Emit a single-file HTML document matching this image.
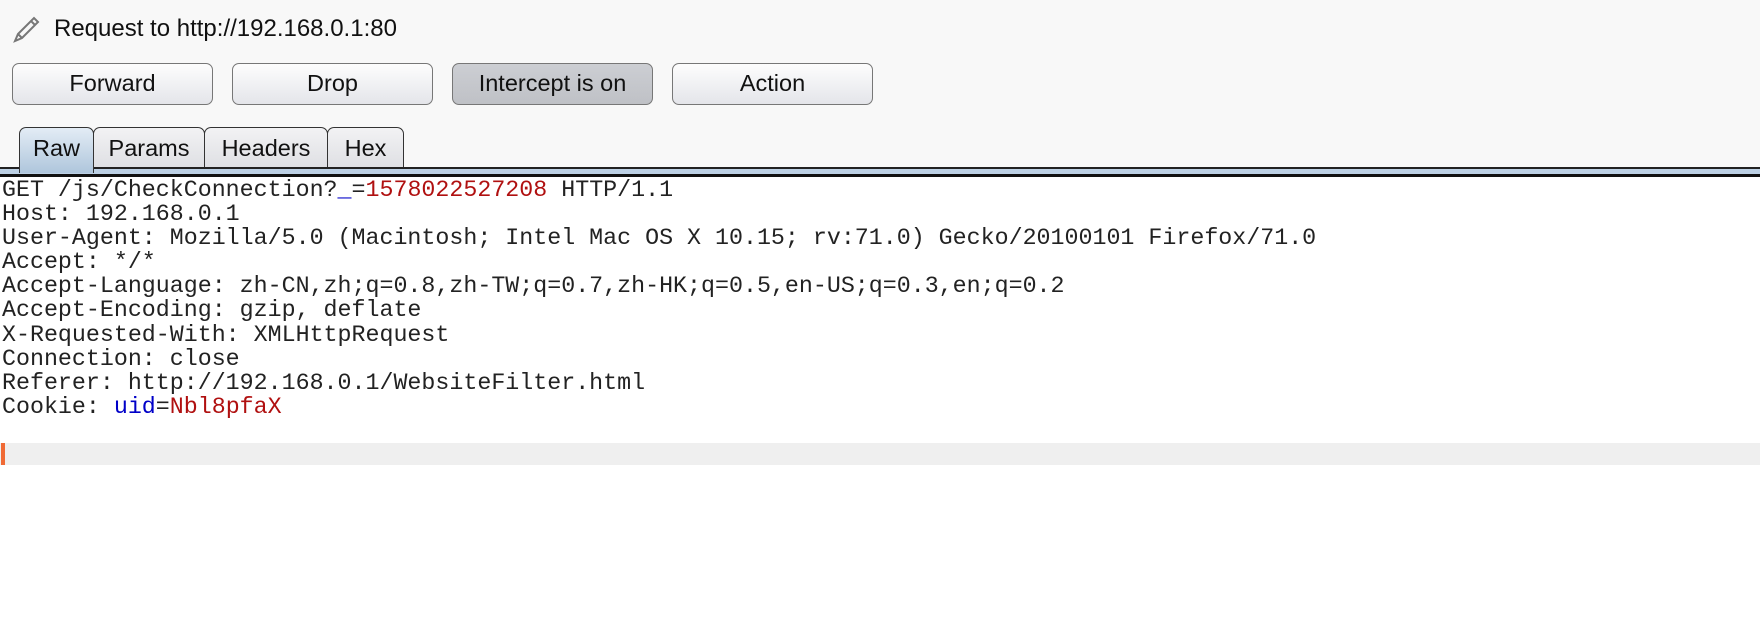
<!DOCTYPE html>
<html><head><meta charset="utf-8"><style>
*{margin:0;padding:0;box-sizing:border-box}
body{width:1760px;height:644px;background:#fff;position:relative;overflow:hidden;font-family:"Liberation Sans",sans-serif}
.top{position:absolute;left:0;top:0;width:1760px;height:168px;background:#f8f8f8}
.title{position:absolute;left:54px;top:15px;font-size:24px;color:#111}
.btn{position:absolute;top:63px;width:201px;height:42px;border:1.5px solid #777;border-radius:7px;background:linear-gradient(#fdfdfd,#e4e5ea);font-size:23.5px;text-align:center;line-height:39px;color:#111}
.btn.on{background:linear-gradient(#ccced3,#bfc1c6)}
.tab{position:absolute;top:127px;height:42px;border:1.5px solid #333;border-bottom:none;border-radius:7px 7px 0 0;background:linear-gradient(#f2f2f4,#dedfe3);font-size:23.5px;text-align:center;line-height:40px;color:#111}
.tab.sel{background:linear-gradient(#e3ecf5,#afc6dc);z-index:2;height:46px}
.band{position:absolute;left:0;top:167px;width:1760px;height:10px;background:#bcd0e4;border-top:2px solid #222;border-bottom:3px solid #111}
pre{position:absolute;left:2px;top:178px;font-family:"Liberation Mono",monospace;font-size:23.3px;line-height:24.1px;color:#222}
.r{color:#b01010}.b{color:#0000c8}
.gray{position:absolute;left:0;top:443px;width:1760px;height:22px;background:#efefef}
.caret{position:absolute;left:1px;top:443px;width:4px;height:22px;background:#f06a35}
</style></head><body>
<div class="top"></div>
<svg style="position:absolute;left:10px;top:14px" width="32" height="32" viewBox="0 0 32 32"><path d="M5 27 L8 20 L24 4 L28 8 L12 24 Z M8 20 L12 24 M21 7 L25 11" fill="none" stroke="#777" stroke-width="2"/></svg>
<div class="title">Request to http://192.168.0.1:80</div>
<div class="btn" style="left:12px">Forward</div>
<div class="btn" style="left:232px">Drop</div>
<div class="btn on" style="left:452px">Intercept is on</div>
<div class="btn" style="left:672px">Action</div>
<div class="tab sel" style="left:19px;width:75px">Raw</div>
<div class="tab" style="left:93px;width:112px">Params</div>
<div class="tab" style="left:204px;width:124px">Headers</div>
<div class="tab" style="left:327px;width:77px">Hex</div>
<div class="band"></div>
<pre>GET /js/CheckConnection?<span class="b">_</span>=<span class="r">1578022527208</span> HTTP/1.1
Host: 192.168.0.1
User-Agent: Mozilla/5.0 (Macintosh; Intel Mac OS X 10.15; rv:71.0) Gecko/20100101 Firefox/71.0
Accept: */*
Accept-Language: zh-CN,zh;q=0.8,zh-TW;q=0.7,zh-HK;q=0.5,en-US;q=0.3,en;q=0.2
Accept-Encoding: gzip, deflate
X-Requested-With: XMLHttpRequest
Connection: close
Referer: http://192.168.0.1/WebsiteFilter.html
Cookie: <span class="b">uid</span>=<span class="r">Nbl8pfaX</span></pre>
<div class="gray"></div><div class="caret"></div>
</body></html>
